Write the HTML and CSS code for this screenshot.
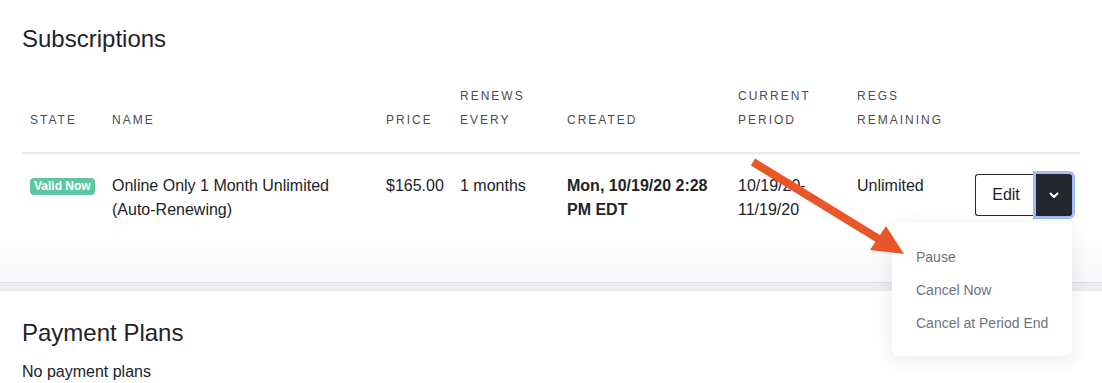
FILE: index.html
```html
<!DOCTYPE html>
<html lang="en">
<head>
  <meta charset="utf-8">
  <title>Subscriptions</title>
  <link rel="stylesheet" href="styles.css">
</head>
<body>
<div class="page">
  <section class="card card-subs">
    <h2>Subscriptions</h2>
    <table class="subs">
      <colgroup>
        <col class="c-state"><col class="c-name"><col class="c-price"><col class="c-renew">
        <col class="c-created"><col class="c-period"><col class="c-regs"><col class="c-action">
      </colgroup>
      <thead>
        <tr>
          <th>State</th>
          <th>Name</th>
          <th>Price</th>
          <th>Renews<br>Every</th>
          <th>Created</th>
          <th>Current<br>Period</th>
          <th>Regs<br>Remaining</th>
          <th></th>
        </tr>
      </thead>
      <tbody>
        <tr>
          <td><span class="badge">Valid Now</span></td>
          <td>Online Only 1 Month Unlimited (Auto-Renewing)</td>
          <td>$165.00</td>
          <td>1 months</td>
          <td class="strong">Mon, 10/19/20 2:28 PM EDT</td>
          <td>10/19/20-<wbr>11/19/20</td>
          <td>Unlimited</td>
          <td>
            <div class="btn-group">
              <button type="button" class="btn-edit">Edit</button>
              <button type="button" class="btn-toggle">
                <svg width="10" height="7" viewBox="0 0 10 7"><path d="M1.5 1.5 L5 5 L8.5 1.5" fill="none" stroke="#fff" stroke-width="2" stroke-linecap="round" stroke-linejoin="round"/></svg>
              </button>
              <ul class="menu">
                <li>Pause</li>
                <li>Cancel Now</li>
                <li>Cancel at Period End</li>
              </ul>
            </div>
          </td>
        </tr>
      </tbody>
    </table>
  </section>
  <section class="card card-plans">
    <h2>Payment Plans</h2>
    <p>No payment plans</p>
  </section>
  <svg class="callout" width="1102" height="383" viewBox="0 0 1102 383">
    <line x1="753" y1="162" x2="882" y2="241" stroke="#e8572a" stroke-width="8"/>
    <polygon points="904,254 870,250 886,226" fill="#e8572a"/>
  </svg>
</div>
</body>
</html>
```

FILE: styles.css
```css
body {
  margin: 0;
  background-color: #ededef;
  font-family: "Liberation Sans", Arial, sans-serif;
  color: #212329;
}
.page {
  position: relative;
  width: 1102px;
  height: 383px;
  overflow: hidden;
}
.card {
  background-color: #fff;
  padding: 0 22px;
}
.card h2 {
  margin: 0;
  font-size: 24px;
  line-height: 32px;
  font-weight: 400;
  color: #1f2228;
}
.card-subs {
  padding-top: 23px;
  padding-bottom: 40px;
  border-bottom: 1px solid #dcdee9;
  background: linear-gradient(to bottom, #fff 84%, #f7f7f9);
}
.card-plans {
  margin-top: 8px;
  padding-top: 26px;
  padding-bottom: 20px;
}
.card-plans p {
  margin: 11px 0 0;
  font-size: 16px;
  line-height: 24px;
}

table.subs {
  margin-top: 9px;
  width: 1058px;
  table-layout: fixed;
  border-collapse: collapse;
}
.c-state { width: 82px; }
.c-name { width: 274px; }
.c-price { width: 74px; }
.c-renew { width: 107px; }
.c-created { width: 171px; }
.c-period { width: 119px; }
.c-regs { width: 118px; }
.c-action { width: 113px; }

.subs th {
  text-align: left;
  vertical-align: bottom;
  padding: 20px 8px;
  font-size: 12px;
  line-height: 24px;
  font-weight: 400;
  letter-spacing: 2px;
  text-transform: uppercase;
  color: #4a4d55;
  border-bottom: 2px solid #e6e9ef;
}
.subs td {
  vertical-align: top;
  padding: 20px 8px;
  font-size: 16px;
  line-height: 24px;
}
.subs td.strong {
  font-weight: 700;
}

.badge {
  display: inline-block;
  margin-top: 4px;
  padding: 1px 4px;
  border-radius: 4px;
  background-color: #5cc7a1;
  color: #fff;
  font-size: 12px;
  line-height: 15px;
  font-weight: 700;
  vertical-align: top;
}

.btn-group {
  position: relative;
  display: flex;
  justify-content: flex-end;
}
.btn-group button {
  font-family: inherit;
  height: 42px;
  margin: 0;
}
.btn-edit {
  width: 61px;
  border: 1px solid #24262d;
  border-right: 0;
  border-radius: 3px 0 0 3px;
  background-color: #fff;
  color: #212329;
  font-size: 16px;
}
.btn-toggle {
  width: 36px;
  border: 0;
  border-radius: 0 3px 3px 0;
  background-color: #24262d;
  box-shadow: 0 0 0 3px #a3bcf9;
  display: flex;
  align-items: center;
  justify-content: center;
  padding: 0;
}

.menu {
  position: absolute;
  z-index: 5;
  right: 0;
  top: 49px;
  width: 180px;
  margin: 0;
  padding: 18px 0 16px;
  list-style: none;
  background-color: #fff;
  border-radius: 6px;
  box-shadow: 0 4px 18px rgba(40, 45, 80, 0.1);
}
.menu li {
  padding: 6px 24px;
  font-size: 14px;
  line-height: 21px;
  color: #6e7381;
  white-space: nowrap;
}

.callout {
  position: absolute;
  top: 0;
  left: 0;
  z-index: 10;
  pointer-events: none;
}
```
